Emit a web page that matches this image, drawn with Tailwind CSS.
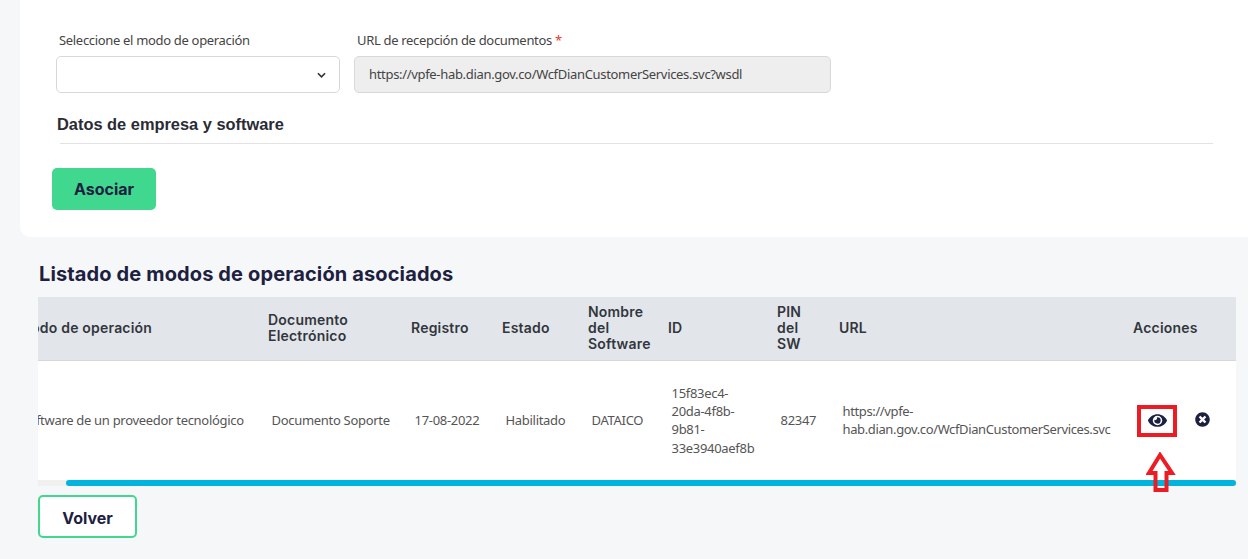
<!DOCTYPE html>
<html lang="es">
<head>
  <meta charset="UTF-8" />
  <title>Modos de operación</title>
  <script src="https://cdn.jsdelivr.net/npm/@tailwindcss/browser@4"></script>
</head>
<body class="bg-[#f5f7f9] font-['Noto_Sans',sans-serif] text-[#4a4a4a] overflow-hidden">
<div class="relative w-[1248px] h-[559px] overflow-hidden">

  <!-- Form card -->
  <section class="ml-[20px] h-[237px] bg-white rounded-bl-[10px] pl-[36px] pt-[32px]">
    <div class="flex gap-[14px]">
      <div class="w-[284px]">
        <label class="block pl-[3px] text-[13px] tracking-[-0.32px] leading-[17px] text-[#444]">Seleccione el modo de operación</label>
        <div class="mt-[7px] h-[37px] bg-white border border-[#d8d8d8] rounded-[5px] flex items-center justify-end pr-[13px]">
          <svg viewBox="0 0 10 6" class="w-[9px] h-[6px] mt-px"><path d="M1 1l4 4 4-4" fill="none" stroke="#333" stroke-width="1.8"/></svg>
        </div>
      </div>
      <div class="w-[477px]">
        <label class="block pl-[3px] text-[13px] tracking-[-0.32px] leading-[17px] text-[#444]">URL de recepción de documentos <span class="text-[#e53935]">*</span></label>
        <div class="mt-[7px] h-[37px] bg-[#eeeeee] border border-[#d8d8d8] rounded-[5px] flex items-center pl-[14px] text-[13px] tracking-[-0.32px] text-[#444]">https://vpfe-hab.dian.gov.co/WcfDianCustomerServices.svc?wsdl</div>
      </div>
    </div>
    <h3 class="mt-[21px] ml-px font-['Liberation_Sans',sans-serif] font-bold text-[16.4px] leading-[20px] text-[#2b2b36]">Datos de empresa y software</h3>
    <div class="mt-[9px] ml-[4px] w-[1153px] h-px bg-[#e2e2e2]"></div>
    <button class="block mt-[24px] -ml-[4px] w-[104px] h-[42px] bg-[#40d88e] rounded-[5px] font-['Inter',sans-serif] font-bold text-[16px] text-[#1d2040]">Asociar</button>
  </section>

  <!-- Table -->
  <section class="ml-[38px] w-[1198px]">
    <h2 class="mt-[25px] ml-px font-['Inter',sans-serif] font-bold text-[20px] tracking-[0.13px] leading-[24px] text-[#1d2040]">Listado de modos de operación asociados</h2>
    <div class="mt-[11px] overflow-hidden">
      <table class="table-fixed -ml-[28px] w-[1226px] border-collapse">
        <colgroup>
          <col class="w-[250px]" /><col class="w-[143px]" /><col class="w-[91px]" /><col class="w-[86px]" /><col class="w-[80px]" /><col class="w-[109px]" /><col class="w-[62px]" /><col class="w-[294px]" /><col class="w-[111px]" />
        </colgroup>
        <thead>
          <tr class="h-[63px] bg-[#e2e6ea] border-b border-[#d4d7db] text-left font-['Inter',sans-serif] text-[14px] tracking-[0.2px] leading-[16px] text-[#33363d]">
            <th class="pl-[8px] font-semibold whitespace-nowrap">Modo de operación</th>
            <th class="pl-[8px] font-semibold">Documento Electrónico</th>
            <th class="pl-[8px] font-semibold">Registro</th>
            <th class="pl-[8px] font-semibold">Estado</th>
            <th class="pl-[8px] font-semibold">Nombre del Software</th>
            <th class="pl-[8px] font-semibold">ID</th>
            <th class="pl-[8px] font-semibold">PIN<br />del<br />SW</th>
            <th class="pl-[8px] font-semibold">URL</th>
            <th class="pl-[8px] font-semibold">Acciones</th>
          </tr>
        </thead>
        <tbody>
          <tr class="h-[120px] bg-white text-[13px] tracking-[-0.3px] leading-[18.3px] text-[#555]">
            <td class="pl-[11.500px] whitespace-nowrap">Software de un proveedor tecnológico</td>
            <td class="pl-[11.500px]">Documento Soporte</td>
            <td class="pl-[11.500px]">17-08-2022</td>
            <td class="pl-[11.500px]">Habilitado</td>
            <td class="pl-[11.500px]">DATAICO</td>
            <td class="pl-[11.500px] pr-[4px]">15f83ec4-<br />20da-4f8b-<br />9b81-<br />33e3940aef8b</td>
            <td class="pl-[11.500px]">82347</td>
            <td class="pl-[11.500px] whitespace-nowrap tracking-[-0.37px]">https://vpfe-<br />hab.dian.gov.co/WcfDianCustomerServices.svc</td>
            <td>
              <div class="flex items-center pl-[23px] gap-[28px] -mt-[1px]">
                <svg viewBox="0 0 576 512" class="w-[19px] h-[17px] mt-[2px]" fill="#1d2040"><path d="M572.52 241.4C518.29 135.59 410.93 64 288 64S57.68 135.64 3.48 241.41a32.35 32.35 0 0 0 0 29.19C57.71 376.41 165.07 448 288 448s230.32-71.64 284.52-177.41a32.35 32.35 0 0 0 0-29.19zM288 400a144 144 0 1 1 144-144 143.93 143.93 0 0 1-144 144zm0-240a95.31 95.31 0 0 0-25.31 3.79 47.85 47.85 0 0 1-66.9 66.9A95.78 95.78 0 1 0 288 160z"/></svg>
                <svg viewBox="0 0 512 512" class="w-[15px] h-[15px]" fill="#1d2040"><path d="M256 8C119 8 8 119 8 256s111 248 248 248 248-111 248-248S393 8 256 8zm121.6 313.1c4.7 4.7 4.7 12.3 0 17L338 377.6c-4.7 4.7-12.3 4.7-17 0L256 312l-65.1 65.6c-4.7 4.7-12.3 4.7-17 0L134.4 338c-4.7-4.7-4.7-12.3 0-17l65.6-65-65.6-65.1c-4.7-4.7-4.7-12.3 0-17l39.6-39.6c4.7-4.7 12.3-4.7 17 0l65 65.7 65.1-65.6c4.7-4.7 12.3-4.7 17 0l39.6 39.6c4.7 4.7 4.7 12.3 0 17L312 256l65.6 65.1z"/></svg>
              </div>
            </td>
          </tr>
        </tbody>
      </table>
      <!-- scrollbar -->
      <div class="h-[6px] bg-[#f0f0f0] pl-[28px]">
        <div class="h-full bg-[#00b4de] rounded-[3px]"></div>
      </div>
    </div>
    <button class="block mt-[9px] w-[99px] h-[43px] pt-[3px] bg-white border-2 border-[#40d88e] rounded-[5px] font-['Inter',sans-serif] font-bold text-[16px] text-[#1d2040]">Volver</button>
  </section>

  <!-- Annotation drawn over the screenshot -->
  <div class="absolute left-[1137px] top-[405px] w-[40px] h-[32px] border-[4px] border-[#ed1c24]"></div>
  <svg class="absolute left-[1146px] top-[452px]" width="30" height="40" viewBox="0 0 30 40"><path d="M14 3L3 21h6.500v17h11V21H26z" fill="none" stroke="#ed1c24" stroke-width="4"/></svg>
</div>
</body>
</html>
